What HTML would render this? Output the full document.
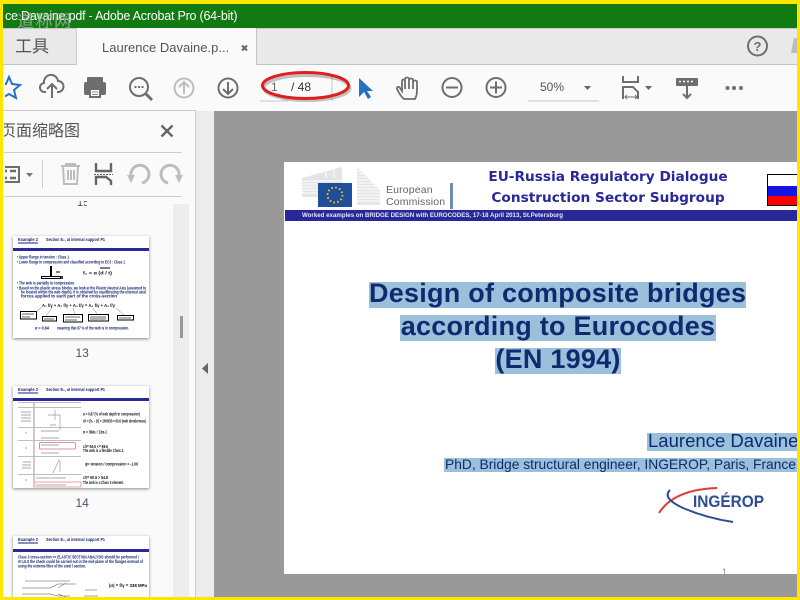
<!DOCTYPE html>
<html><head><meta charset="utf-8"><style>
html,body{margin:0;padding:0;width:800px;height:600px;overflow:hidden;background:#fafafa;font-family:"Liberation Sans","Noto Sans CJK SC",sans-serif}
.a{position:absolute;white-space:nowrap}
svg{position:absolute;overflow:visible}
.sel{background:#9bc0dc;color:#0f2a6e;position:absolute;white-space:nowrap}
</style></head><body>
<div class="a" style="left:0;top:4px;width:800px;height:24px;background:#117a11"></div>
<div class="a" style="left:5px;top:4px;height:24px;width:240px;overflow:hidden;color:#fff;font-size:12.500px;letter-spacing:-.22px;line-height:25px">ce Davaine.pdf - Adobe Acrobat Pro (64-bit)</div>
<div class="a" style="left:0;top:28px;width:800px;height:37px;background:#e9e9e9;border-top:1px solid #c8c8c8;border-bottom:1px solid #c4c4c4;box-sizing:border-box"></div>
<div class="a" style="left:76px;top:28px;width:181px;height:37px;background:#fafafa;border-left:1px solid #ccc;border-right:1px solid #c4c4c4;box-sizing:border-box"></div>
<div class="a" style="left:17px;top:12px;color:#a9b5a9;font-size:17px;letter-spacing:1.500px;line-height:20px;opacity:.8">道称网</div>
<div class="a" style="left:15px;top:37px;font-size:17px;color:#555;line-height:20px">工具</div>
<div class="a" style="left:102px;top:40px;font-size:13px;color:#555;line-height:16px">Laurence Davaine.p...</div>
<svg style="left:0;top:0" width="800" height="110" fill="none">
<path d="M242 45.500l5 5M247 45.500l-5 5" stroke="#666" stroke-width="2"/>
<circle cx="757.500" cy="46" r="9.500" stroke="#6e6e6e" stroke-width="2"/>
<text x="757.500" y="51" font-size="13" font-weight="bold" fill="#6e6e6e" text-anchor="middle" font-family="Liberation Sans">?</text>
<path d="M791 53l3-15h3v15z" fill="#bbb"/>
<path d="M9 77L12 84L20 85L14 90L16 98L9 94L2 98L4 90L-2 85L6 84z" stroke="#2b6fc4" stroke-width="2"/>
<rect x="0" y="72" width="5" height="30" fill="#fafafa"/>
<path d="M46 92h-1a4.500 4.500 0 0 1-1-9 7 7 0 0 1 14-2 5.500 5.500 0 0 1 0 11h-1" stroke="#6e6e6e" stroke-width="2"/><path d="M52 98V84M47 89l5-5 5 5" stroke="#6e6e6e" stroke-width="2"/>
<path d="M87 83v-5a1 1 0 0 1 1-1h14a1 1 0 0 1 1 1v5z" fill="#6e6e6e"/><rect x="84" y="82" width="22" height="13" rx="2" fill="#6e6e6e"/><rect x="90" y="89" width="10" height="8" fill="#fff" stroke="#6e6e6e" stroke-width="2"/><path d="M92 92h6M92 94.500h6" stroke="#888"/>
<circle cx="139" cy="87" r="9" stroke="#6e6e6e" stroke-width="2"/><path d="M146 94l6 6" stroke="#6e6e6e" stroke-width="3"/><path d="M134.500 87h2M138 87h2M141.500 87h2" stroke="#6e6e6e" stroke-width="2"/>
<circle cx="184" cy="88" r="9.500" stroke="#bdbdbd" stroke-width="2"/><path d="M184 94V82M179 87l5-5 5 5" stroke="#bdbdbd" stroke-width="2"/>
<circle cx="228" cy="88" r="9.500" stroke="#6e6e6e" stroke-width="2"/><path d="M228 82v12M223 89l5 5 5-5" stroke="#6e6e6e" stroke-width="2"/>
<path d="M260 101h28M332 75v26" stroke="#c8c8c8"/>
<path d="M359 78v19l5-5 4 7 3-2-4-6h6z" fill="#2b6fc4"/>
<path d="M404 99c-3-2-5-6-7-10-1-2 2-3 3-1l2 3V81c0-2 3-2 3 0v-2c0-2 4-2 4 0v1c0-2 4-2 4 0v2c0-2 4-2 4 0v9c0 4-1 6-2 8zM405 81v8M409 80v9M413 81v8" stroke="#6e6e6e" stroke-width="1.800"/>
<circle cx="452" cy="87.500" r="9.500" stroke="#6e6e6e" stroke-width="2"/><path d="M446 87.500h12" stroke="#6e6e6e" stroke-width="2"/>
<circle cx="496" cy="87.500" r="9.500" stroke="#6e6e6e" stroke-width="2"/><path d="M490 87.500h12M496 81.500v12" stroke="#6e6e6e" stroke-width="2"/>
<path d="M528 101h71" stroke="#c8c8c8"/><path d="M584 86h7l-3.500 4z" fill="#666"/>
<path d="M623 76v6h15v-6" stroke="#6e6e6e" stroke-width="2"/><path d="M623 99V87h10l5 5v7" stroke="#6e6e6e" stroke-width="2"/><path d="M625 97h12M627 95l-2 2 2 2M635 95l2 2-2 2" stroke="#6e6e6e"/>
<path d="M645 86h7l-3.500 4z" fill="#666"/>
<rect x="676" y="78" width="22" height="8" rx="1" fill="#6e6e6e"/><path d="M679 81.500h2M683 81.500h2M687 81.500h2M691 81.500h2" stroke="#fff" stroke-width="1.500"/><path d="M687 86v12M683 94l4 4 4-4" stroke="#6e6e6e" stroke-width="2"/>
<circle cx="727.500" cy="88" r="2" fill="#6e6e6e"/><circle cx="734" cy="88" r="2" fill="#6e6e6e"/><circle cx="741" cy="88" r="2" fill="#6e6e6e"/>
</svg>
<div class="a" style="left:271px;top:80px;font-size:12px;color:#666;line-height:15px">1</div>
<div class="a" style="left:291px;top:80px;font-size:12px;color:#333;line-height:15px">/ 48</div>
<div class="a" style="left:540px;top:80px;font-size:12px;color:#555;line-height:15px">50%</div>
<svg style="left:0;top:0" width="400" height="110" fill="none">
<ellipse cx="307" cy="88" rx="43" ry="12.500" stroke="#777" stroke-width="3" opacity=".45"/>
<ellipse cx="305.500" cy="85.500" rx="43" ry="13" stroke="#e11d1d" stroke-width="3"/>
</svg>

<div class="a" style="left:0;top:110px;width:196px;height:490px;background:#fafafa;border-right:1px solid #ccc;border-top:1px solid #ccc;box-sizing:border-box"></div>
<div class="a" style="left:196px;top:111px;width:18px;height:489px;background:#ececec"></div>
<div class="a" style="left:214px;top:111px;width:586px;height:489px;background:#999"></div>
<div class="a" style="left:4px;top:121px;width:80px;height:22px;overflow:hidden;font-size:16px;color:#555;line-height:22px;text-indent:-4px">页面缩略图</div>
<div class="a" style="left:4px;top:152px;width:178px;height:1px;background:#ccc"></div>
<div class="a" style="left:4px;top:196px;width:178px;height:1px;background:#ccc"></div>
<div class="a" style="left:42px;top:160px;width:1px;height:28px;background:#ccc"></div>
<div class="a" style="left:173px;top:204px;width:16px;height:396px;background:#ededed"></div>
<div class="a" style="left:180px;top:316px;width:3px;height:22px;background:#999"></div>
<svg style="left:0;top:0" width="220" height="400" fill="none">
<path d="M161.500 125.500l11 11M172.500 125.500l-11 11" stroke="#666" stroke-width="2.400"/>
<path d="M5 167h14v15H5" stroke="#6e6e6e" stroke-width="2"/><path d="M5 171h2M10 171h6M5 178h2M10 178h6" stroke="#6e6e6e" stroke-width="2.500"/>
<path d="M26 173h7l-3.500 4z" fill="#777"/>
<path d="M61 166h19M66 166v-2h9v2M63 166l1 18h13l1-18M68 170v10M71 170v10M74 170v10" stroke="#bdbdbd" stroke-width="2"/>
<path d="M96 163v8h15v-8M96 185v-8h10l5 4v4" stroke="#666" stroke-width="2.400"/><path d="M94 174.500h19" stroke="#666" stroke-dasharray="2 1"/>
<path d="M142 183a9 9 0 1 0-11-8" stroke="#bdbdbd" stroke-width="3"/><path d="M127 175h8l-4 8z" fill="#bdbdbd"/>
<path d="M168 183a9 9 0 1 1 11-8" stroke="#bdbdbd" stroke-width="3"/><path d="M175 175h8l-4 8z" fill="#bdbdbd"/>
<path d="M202 368.500l6-5.500v11z" fill="#666"/>
</svg>
<div class="a" style="left:77px;top:201px;width:10px;height:5px;overflow:hidden;font-size:11px;color:#555;line-height:5px">15</div>

<!-- thumbnails -->
<div class="a" style="left:13px;top:236px;width:136px;height:102px;background:#fff;box-shadow:0 1px 3px #888"></div>
<div class="a" style="left:75.500px;top:346px;font-size:12px;color:#5a4a6a;line-height:14px">13</div>
<div class="a" style="left:13px;top:386px;width:136px;height:102px;background:#fff;box-shadow:0 1px 3px #888"></div>
<div class="a" style="left:75.500px;top:496px;font-size:12px;color:#5a4a6a;line-height:14px">14</div>
<div class="a" style="left:13px;top:536px;width:136px;height:64px;background:#fff;box-shadow:0 1px 3px #888"></div>
<svg style="left:0;top:0" width="200" height="600" fill="none" font-family="Liberation Sans" font-weight="bold" font-size="4.500">
<defs><filter id="b" x="-5%" y="-5%" width="110%" height="110%"><feGaussianBlur stdDeviation=".25"/></filter></defs>
<g filter="url(#b)">
<!-- 13 -->
<g fill="#14246e">
<text x="18" y="241" textLength="20" lengthAdjust="spacingAndGlyphs">Example 2</text><path d="M18 243h20" stroke="#14246e"/>
<text x="46" y="241" textLength="59" lengthAdjust="spacingAndGlyphs">Section E₂, at internal support P1</text>
<rect x="13" y="248" width="136" height="3" fill="#2a2a96"/>
<text x="17" y="258.500" textLength="52" lengthAdjust="spacingAndGlyphs">• Upper flange in tension : Class 1</text>
<text x="17" y="263.500" textLength="108" lengthAdjust="spacingAndGlyphs">• Lower flange in compression and classified according to EC3 : Class 1</text>
<text x="17" y="284.500" textLength="58" lengthAdjust="spacingAndGlyphs">• The web is partially in compression.</text>
<text x="17" y="289.500" textLength="129" lengthAdjust="spacingAndGlyphs">• Based on the plastic stress blocks, we look at the Plastic Neutral Axis (assumed to</text>
<text x="21" y="293.500" textLength="125" lengthAdjust="spacingAndGlyphs">be located within the web depth). It is obtained by equilibrating the external axial</text>
<text x="21" y="297.500" textLength="96" lengthAdjust="spacingAndGlyphs">forces applied to each part of the cross-section</text>
<text x="35" y="329.500" textLength="14" lengthAdjust="spacingAndGlyphs">α = 0.84</text>
<text x="57" y="329.500" textLength="72" lengthAdjust="spacingAndGlyphs">meaning that 87 % of the web is in compression.</text>
</g>
<g fill="#111">
<text x="83" y="274.500" textLength="29" lengthAdjust="spacingAndGlyphs">f₁ = α (d / t)</text>
<text x="42" y="307" textLength="73" lengthAdjust="spacingAndGlyphs">A₁ f/γ + A₂ f/γ + A₃ f/γ = A₄ f/γ + A₅ f/γ</text>
</g>
<path d="M51 266v10" stroke="#000" stroke-width="2"/><rect x="41.500" y="276.500" width="19" height="2" stroke="#000"/><path d="M56 272h4" stroke="#000"/><path d="M62 276v3" stroke="#000" stroke-width="1.500"/>
<path d="M100 268h10" stroke="#000"/>
<g stroke="#000"><rect x="20.500" y="311.500" width="16" height="7.500"/><rect x="42.500" y="316.500" width="14" height="4.500"/><rect x="63.500" y="314.500" width="19" height="7.500"/><rect x="88.500" y="314.500" width="20" height="6.500"/><rect x="117.500" y="315.500" width="16" height="4.500"/></g>
<path d="M22 314h12M22 317h8M44 319h10M65 317h15M65 320h12M90 317h16M90 319h16M119 318h12" stroke="#333" stroke-width=".7"/>
<path d="M37 311l6-5M46 316l6-8M75 314l-2-6M97 314l-4-6M124 315l-8-7" stroke="#777" stroke-width=".5"/>
<!-- 14 -->
<g fill="#14246e">
<text x="18" y="391" textLength="20" lengthAdjust="spacingAndGlyphs">Example 2</text><path d="M18 393h20" stroke="#14246e"/>
<text x="46" y="391" textLength="59" lengthAdjust="spacingAndGlyphs">Section E₂, at internal support P1</text>
<rect x="13" y="398" width="136" height="3" fill="#2a2a96"/>
</g>
<g fill="#111">
<text x="83" y="415.500" textLength="57" lengthAdjust="spacingAndGlyphs">α = 0.87 (% of web depth in compression)</text>
<text x="83" y="422.500" textLength="63" lengthAdjust="spacingAndGlyphs">c/t = (h₀ - 2t) = 2000/30 = 60.6 (web slenderness)</text>
<text x="83" y="433.500" textLength="24" lengthAdjust="spacingAndGlyphs">α = 396ε / 13α-1</text>
<text x="83" y="448" textLength="25" lengthAdjust="spacingAndGlyphs">c/t= 60.6 &lt;= 69.6</text>
<text x="83" y="452" textLength="41" lengthAdjust="spacingAndGlyphs">The web is a flexible Class 2.</text>
<text x="85" y="465.500" textLength="53" lengthAdjust="spacingAndGlyphs">ψ= tension / compression = -1.06</text>
<text x="83" y="479" textLength="25" lengthAdjust="spacingAndGlyphs">c/t= 60.6 &gt; 54.8</text>
<text x="83" y="484" textLength="41" lengthAdjust="spacingAndGlyphs">The web is a Class 3 element.</text>
</g>
<path d="M18 402.500h63M18 407.500h63M18 427.500h63M18 440.500h63M18 456.500h63M18 474.500h63" stroke="#aaa" stroke-width=".8"/>
<path d="M34 402v85" stroke="#bbb" stroke-width="1.500"/>
<rect x="39.500" y="442.500" width="36" height="6.500" rx="1" stroke="#d8707a" stroke-width=".8"/>
<rect x="34" y="482" width="47" height="5" stroke="#eca0a6" stroke-width="1"/>
<path d="M48 415h12v15M55 410v10M50 425h6M59 460l-6 13M60 460v12" stroke="#999" stroke-width=".7"/>
<path d="M21 412h10M21 415h10M21 418h10M21 421h10M23 462h8M22 465h9M22 468h9M25 433h2M25 448h2M25 480h2M41 431h18M41 438h18M41 445h18M41 453h18M36 478h30M36 485h30" stroke="#aaa" stroke-width="1"/>
<!-- 15 -->
<g fill="#14246e">
<text x="18" y="541" textLength="20" lengthAdjust="spacingAndGlyphs">Example 2</text><path d="M18 543h20" stroke="#14246e"/>
<text x="46" y="541" textLength="59" lengthAdjust="spacingAndGlyphs">Section E₂, at internal support P1</text>
<rect x="13" y="549" width="136" height="3" fill="#2a2a96"/>
<text x="18" y="558.500" textLength="121" lengthAdjust="spacingAndGlyphs">Class 3 cross-section =&gt; ELASTIC SECTION ANALYSIS should be performed !</text>
<text x="18" y="563" textLength="125" lengthAdjust="spacingAndGlyphs">At ULS the check could be carried out in the mid-plane of the flanges instead of</text>
<text x="18" y="567.500" textLength="68" lengthAdjust="spacingAndGlyphs">using the extreme fibre of the steel l section.</text>
</g>
<text x="109" y="587" fill="#111" textLength="38" lengthAdjust="spacingAndGlyphs">|σ| = f/γ = 338 MPa</text>
<path d="M25 581h45M22 588h28l8-4h18M22 594h28l8 2h12M58 588l8-5M58 594l8 3M85 590h12M84 596h14" stroke="#888" stroke-width=".7"/>
</g>
</svg>

<!-- main page -->
<div class="a" style="left:284px;top:162px;width:516px;height:412px;background:#fff;overflow:hidden">
<svg style="left:0;top:0" width="190" height="50" fill="none">
<path d="M18 16L58 5v30H18z" fill="#e4e4e4"/><path d="M73 5l23 23v15H73z" fill="#e6e6e6"/>
<path d="M18 19h40M18 22h40M18 25h40M18 28h40M18 31h40M73 9h4M73 12h8M73 15h11M73 18h14M73 21h17M73 24h20M73 27h23M73 30h23M73 33h23M73 36h23M73 39h23M50 8v8M42 10v6" stroke="#fff"/>
<rect x="34" y="21" width="34" height="24" fill="#1f4e9b"/>
<circle cx="51" cy="33" r="7.500" stroke="#f5d000" stroke-width="2" stroke-dasharray="1.500 2.430"/>
<rect x="166" y="21" width="3" height="26" fill="#6c8fb8"/>
</svg>
<div class="a" style="left:102px;top:22px;font-size:10.500px;line-height:12px;color:#666;letter-spacing:.15px">European<br>Commission</div>
<div class="a" style="left:184px;top:5px;width:280px;text-align:center;font:bold 13.700px/21px 'DejaVu Sans',sans-serif;color:#28289a">EU-Russia Regulatory Dialogue<br>Construction Sector Subgroup</div>
<div class="a" style="left:483px;top:12px;width:40px;height:32px;background:linear-gradient(#fff 0 11px,#1414e6 11px 21px,#f00 21px);border:1px solid #000;box-sizing:border-box"></div>
<div class="a" style="left:1px;top:48px;width:515px;height:11px;background:#28289a"></div>
<div class="a" style="left:18px;top:48px;font-size:6.150px;font-weight:bold;color:#e8e8f4;line-height:11px">Worked examples on BRIDGE DESIGN with EUROCODES, 17-18 April 2013, St.Petersburg</div>
<div class="sel" style="left:85px;top:120px;height:26px;font:bold 27px/22px 'Liberation Sans',sans-serif;letter-spacing:.25px;width:377px;text-align:center">Design of composite bridges</div>
<div class="sel" style="left:116px;top:153px;height:26px;font:bold 27px/22px 'Liberation Sans',sans-serif;letter-spacing:.25px;width:316px;text-align:center">according to Eurocodes</div>
<div class="sel" style="left:211px;top:186px;height:26px;font:bold 27px/22px 'Liberation Sans',sans-serif;letter-spacing:.25px;width:126px;text-align:center">(EN 1994)</div>
<div class="sel" style="left:363px;top:271px;width:150px;height:18px;font-size:18.550px;line-height:16px;padding:0;text-indent:1px">Laurence Davaine</div>
<div class="sel" style="left:160px;top:296px;width:353px;height:14px;font-size:13.800px;line-height:13px;text-indent:1px">PhD, Bridge structural engineer, INGEROP, Paris, France</div>
<svg style="left:370px;top:320px" width="120" height="50" fill="none">
<path d="M5 31C15 15 35 7 63 6" stroke="#e33b3b" stroke-width="2"/>
<path d="M16 8c-6 6 0 12 13 18 14 6 30 11 50 14" stroke="#2c4d92" stroke-width="2"/>
<text x="39" y="25" font-family="Liberation Sans" font-weight="bold" font-size="17" fill="#2c4d92" textLength="71" lengthAdjust="spacingAndGlyphs">INGÉROP</text>
</svg>
<div class="a" style="left:438px;top:405px;font-size:9px;color:#888;line-height:10px">1</div>
</div>
<div class="a" style="left:797px;top:0;width:3px;height:600px;background:#ffe600"></div>
<div class="a" style="left:0;top:0;width:800px;height:4px;background:#ffe600"></div>
<div class="a" style="left:0;top:0;width:3px;height:600px;background:#ffe600"></div>
<div class="a" style="left:0;top:597px;width:800px;height:3px;background:#ffe600"></div>
</body></html>
